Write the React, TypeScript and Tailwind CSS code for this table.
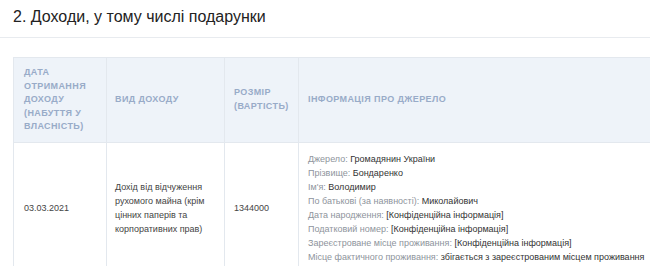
export default function App() {
  const source = [
    { label: "Джерело:", value: "Громадянин України" },
    { label: "Прізвище:", value: "Бондаренко" },
    { label: "Ім'я:", value: "Володимир" },
    { label: "По батькові (за наявності):", value: "Миколайович" },
    { label: "Дата народження:", value: "[Конфіденційна інформація]" },
    { label: "Податковий номер:", value: "[Конфіденційна інформація]" },
    { label: "Зареєстроване місце проживання:", value: "[Конфіденційна інформація]" },
    { label: "Місце фактичного проживання:", value: "збігається з зареєстрованим місцем проживання" },
  ];

  return (
    <div className="w-[650px] h-[266px] overflow-hidden bg-white font-['Liberation_Sans',Arial,sans-serif]">
      {/* Section title */}
      <div className="h-[38px] border-b border-[#e8ebef] pl-[13px] pt-[7px]">
        <h2 className="text-[16px] leading-[20px] text-[#222]">2. Доходи, у тому числі подарунки</h2>
      </div>

      <div className="pl-[13px] pt-[19px]">
        <table className="w-[720px] border-collapse table-fixed">
          <colgroup>
            <col className="w-[93px]" />
            <col className="w-[118px]" />
            <col className="w-[74px]" />
            <col />
          </colgroup>
          <thead>
            <tr className="h-[85px] bg-[#eef3f9] text-left text-[9px] leading-[13.6px] font-bold uppercase tracking-[0.4px] text-[#98abc8]">
              <th className="border border-[#e3e8ee] px-[10px] align-middle font-bold">
                Дата отримання доходу (набуття у власність)
              </th>
              <th className="border border-[#e3e8ee] px-[8px] align-middle font-bold">Вид доходу</th>
              <th className="border border-[#e3e8ee] px-[9px] align-middle font-bold">Розмір (вартість)</th>
              <th className="border border-[#e3e8ee] px-[9px] align-middle font-bold">Інформація про джерело</th>
            </tr>
          </thead>
          <tbody>
            <tr className="text-[9px] leading-[14px] text-[#444]">
              <td className="border border-[#e3e8ee] px-[10px] py-[9px] align-middle">03.03.2021</td>
              <td className="border border-[#e3e8ee] px-[8px] py-[9px] align-middle">
                Дохід від відчуження рухомого майна (крім цінних паперів та корпоративних прав)
              </td>
              <td className="border border-[#e3e8ee] px-[9px] py-[9px] align-middle">1344000</td>
              <td className="border border-[#e3e8ee] px-[9px] py-[9px] align-middle">
                {source.map((row) => (
                  <div key={row.label} className="whitespace-nowrap">
                    <span className="text-[#8e949c]">{row.label}</span>{" "}
                    <span className="text-[#333]">{row.value}</span>
                  </div>
                ))}
              </td>
            </tr>
          </tbody>
        </table>
      </div>
    </div>
  );
}
